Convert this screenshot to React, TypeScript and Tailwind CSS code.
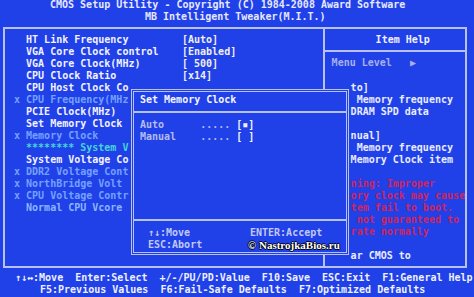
import React from "react";

type Row = { p: string; t: string; v?: string; c: string };

const rows: Row[] = [
  { p: "  ", t: "HT Link Frequency", v: "[Auto]", c: "text-[#f2f2ff]" },
  { p: "  ", t: "VGA Core Clock control", v: "[Enabled]", c: "text-[#f2f2ff]" },
  { p: "  ", t: "VGA Core Clock(MHz)", v: "[ 500]", c: "text-[#f2f2ff]" },
  { p: "  ", t: "CPU Clock Ratio", v: "[x14]", c: "text-[#f2f2ff]" },
  { p: "  ", t: "CPU Host Clock Co", c: "text-[#f2f2ff]" },
  { p: "x ", t: "CPU Frequency(MHz", c: "text-[#74a0ff]" },
  { p: "  ", t: "PCIE Clock(MHz)", c: "text-[#f2f2ff]" },
  { p: "  ", t: "Set Memory Clock", c: "text-[#f2f2ff]" },
  { p: "x ", t: "Memory Clock", c: "text-[#74a0ff]" },
  { p: "  ", t: "******** System V", c: "text-[#44d4d8]" },
  { p: "  ", t: "System Voltage Co", c: "text-[#f2f2ff]" },
  { p: "x ", t: "DDR2 Voltage Cont", c: "text-[#74a0ff]" },
  { p: "x ", t: "NorthBridge Volt", c: "text-[#74a0ff]" },
  { p: "x ", t: "CPU Voltage Contr", c: "text-[#74a0ff]" },
  { p: "  ", t: "Normal CPU Vcore", c: "text-[#8cb4ff]" },
];

const help: { t: string; red?: boolean }[] = [
  { t: "to]" },
  { t: " Memory frequency" },
  { t: "DRAM SPD data" },
  { t: "" },
  { t: "nual]" },
  { t: " Memory frequency" },
  { t: "Memory Clock item" },
  { t: "" },
  { t: "ning: Improper", red: true },
  { t: "ory clock may cause", red: true },
  { t: "tem fail to boot.", red: true },
  { t: " not guaranteed to", red: true },
  { t: "rate normally", red: true },
  { t: "" },
  { t: "ar CMOS to" },
];

export default function App() {
  return (
    <div className="relative w-[474px] h-[297px] overflow-hidden bg-[#2040e8] [font-family:'DejaVu_Sans_Mono',monospace] text-[10px] leading-[12px] font-bold whitespace-pre">
      <header className="h-[28px] text-[#e6e8ff]">
        <div className="-mt-[1px] h-[12px] pl-[50px]">
          CMOS Setup Utility - Copyright (C) 1984-2008 Award Software
        </div>
        <div className="h-[12px] pl-[145px]">MB Intelligent Tweaker(M.I.T.)</div>
      </header>

      <div className="ml-[3px] w-[464px] h-[241px] border-2 border-[#b8c2f2] flex">
        <div className="w-[320px] border-r-2 border-[#b8c2f2] pt-[5px] pl-[9px]">
          {rows.map((r, i) => (
            <div key={i} className="flex h-[12px]">
              <div className={`w-[168px] ${r.c}`}>
                {r.p}
                {r.t}
              </div>
              {r.v && <div className="text-[#f0f0e8]">{r.v}</div>}
            </div>
          ))}
        </div>
        <div className="flex-1 flex flex-col">
          <div className="h-[23px] border-b-2 border-[#b8c2f2] pt-[5px] pl-[51px] text-[#f0f0ff]">
            Item Help
          </div>
          <div className="mt-[5px] h-[12px] pl-[7px] text-[#a8b0ec]">Menu Level   ▶</div>
          <div className="mt-[13px] pl-[26px]">
            {help.map((h, i) => (
              <div
                key={i}
                className={`h-[12px] ${h.red ? "text-[#d0245e]" : "text-[#e8ecff]"}`}
              >
                {h.t}
              </div>
            ))}
          </div>
        </div>
      </div>

      <footer className="mt-[4px] text-[#eef0ff]">
        <div className="h-[12px] pl-[15px]">
          ↑↓↔:Move  Enter:Select  +/-/PU/PD:Value  F10:Save  ESC:Exit  F1:General Help
        </div>
        <div className="h-[12px] pl-[40px]">
          F5:Previous Values  F6:Fail-Safe Defaults  F7:Optimized Defaults
        </div>
      </footer>

      <div className="absolute left-[131px] top-[89px] w-[218px] h-[166px] border-[3px] border-double border-[#b8c2f2] bg-[#2040e8] flex flex-col">
        <div className="pt-[2px] pl-[6px] h-[14px] text-[#f4f4ff]">Set Memory Clock</div>
        <div className="mt-[5px] h-[2px] bg-[#b8c2f2]" />
        <div className="mt-[6px] pl-[6px] text-[#b4bcf0]">
          <div className="h-[12px]">
            Auto      ..... <span className="text-[#f0f0ff]">[▪]</span>
          </div>
          <div className="h-[12px]">
            Manual    ..... <span className="text-[#f0f0ff]">[ ]</span>
          </div>
        </div>
        <div className="mt-auto h-[2px] bg-[#b8c2f2]" />
        <div className="mt-[6px] mb-px pl-[14px] flex text-[#c0c8f4]">
          <div className="w-[102px]">
            <div className="h-[12px]">↑↓:Move</div>
            <div className="h-[12px]">ESC:Abort</div>
          </div>
          <div>
            <div className="h-[12px]">ENTER:Accept</div>
          </div>
        </div>
      </div>

      <div className="absolute left-[248px] top-[238px] text-[11px] leading-[14px] text-white [font-family:'Liberation_Serif',serif] font-bold [text-shadow:1px_0_0_#000,-1px_0_0_#000,0_1px_0_#000,0_-1px_0_#000]">
        © NastrojkaBios.ru
      </div>
    </div>
  );
}
